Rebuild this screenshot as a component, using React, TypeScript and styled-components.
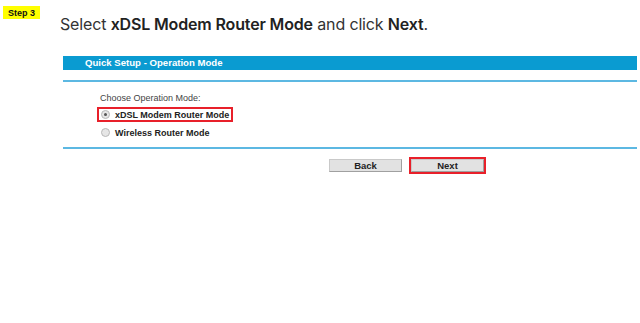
import React from "react";
import styled, { createGlobalStyle } from "styled-components";

const Global = createGlobalStyle`
  html, body { margin: 0; padding: 0; background: #ffffff; }
  body { width: 640px; height: 323px; overflow: hidden; }
`;

const Page = styled.div`
  width: 640px;
  height: 323px;
  background: #fff;
  display: flex;
  flex-direction: column;
`;

const TopRow = styled.div`
  display: flex;
  align-items: flex-start;
  padding: 6px 0 0 3px;
  height: 44px;
  box-sizing: border-box;
`;

const Badge = styled.div`
  width: 37px;
  height: 13px;
  background: #ffff00;
  font-family: "Liberation Sans", Arial, sans-serif;
  font-weight: 700;
  font-size: 9px;
  color: #111;
  display: flex;
  align-items: center;
  justify-content: center;
`;

const Heading = styled.div`
  margin: 8px 0 0 20px;
  font-family: Inter, "Liberation Sans", sans-serif;
  font-size: 16px;
  letter-spacing: -0.15px;
  color: #333;
  line-height: 20px;
  white-space: nowrap;
  b { font-weight: 600; color: #222; }
`;

const Panel = styled.div`
  margin: 12px 0 0 63px;
  width: 574px;
  display: flex;
  flex-direction: column;
  font-family: "Liberation Sans", Arial, sans-serif;
`;

const TitleBar = styled.div`
  height: 14px;
  background: #0a9bd1;
  color: #fff;
  font-size: 9.6px;
  font-weight: 700;
  line-height: 14px;
  padding-left: 22px;
`;

const Divider = styled.div<{ $gap: number }>`
  margin-top: ${(p) => p.$gap}px;
  height: 2px;
  background: #5cb8e2;
`;

const Form = styled.div`
  padding: 10px 0 0 34px;
  display: flex;
  flex-direction: column;
  height: 65px;
  box-sizing: border-box;
`;

const Caption = styled.div`
  font-size: 9px;
  color: #444;
  line-height: 12px;
  padding-left: 3px;
`;

const Option = styled.label<{ $highlight?: boolean }>`
  display: flex;
  align-items: center;
  width: 136px;
  height: 15px;
  box-sizing: border-box;
  border: 2px solid ${(p) => (p.$highlight ? "#e8202a" : "transparent")};
  padding-left: 2px;
  font-size: 9px;
  font-weight: 700;
  color: #222;
  white-space: nowrap;
  margin-top: ${(p) => (p.$highlight ? 3 : 3)}px;
`;

const Radio = styled.span<{ $checked?: boolean }>`
  width: 7px;
  height: 7px;
  border-radius: 50%;
  border: 1px solid #b8b8b8;
  background: #e6e6e6;
  margin-right: 5px;
  display: flex;
  align-items: center;
  justify-content: center;
  flex-shrink: 0;
  &::after {
    content: "";
    width: 3px;
    height: 3px;
    border-radius: 50%;
    background: ${(p) => (p.$checked ? "#555" : "transparent")};
  }
`;

const ButtonRow = styled.div`
  display: flex;
  align-items: center;
  padding: 8px 0 0 264px;
  gap: 5px;
`;

const Frame = styled.div<{ $highlight?: boolean }>`
  border: 2px solid ${(p) => (p.$highlight ? "#e8202a" : "transparent")};
  display: flex;
`;

const Button = styled.div`
  width: 73px;
  height: 13px;
  box-sizing: border-box;
  background: #e2e2e2;
  border: 1px solid #c9c9c9;
  border-right-color: #a0a0a0;
  border-bottom-color: #a0a0a0;
  font-size: 9.5px;
  font-weight: 700;
  color: #222;
  display: flex;
  align-items: center;
  justify-content: center;
`;

export default function App() {
  return (
    <>
      <Global />
      <Page>
        <TopRow>
          <Badge>Step 3</Badge>
          <Heading>
            Select <b>xDSL Modem Router Mode</b> and click <b>Next</b>.
          </Heading>
        </TopRow>
        <Panel>
          <TitleBar>Quick Setup - Operation Mode</TitleBar>
          <Divider $gap={10} />
          <Form>
            <Caption>Choose Operation Mode:</Caption>
            <Option $highlight>
              <Radio $checked />
              xDSL Modem Router Mode
            </Option>
            <Option>
              <Radio />
              Wireless Router Mode
            </Option>
          </Form>
          <Divider $gap={0} />
          <ButtonRow>
            <Frame>
              <Button>Back</Button>
            </Frame>
            <Frame $highlight>
              <Button>Next</Button>
            </Frame>
          </ButtonRow>
        </Panel>
      </Page>
    </>
  );
}
